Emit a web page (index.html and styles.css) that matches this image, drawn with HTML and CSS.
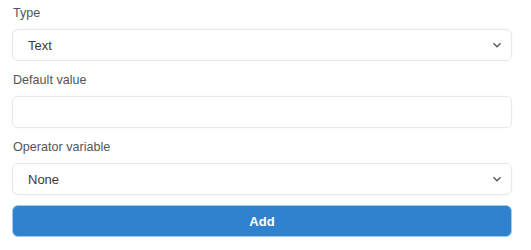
FILE: index.html
```html
<!DOCTYPE html>
<html>
<head>
<meta charset="utf-8">
<link rel="stylesheet" href="styles.css">
</head>
<body>
<form class="form">
  <div class="field">
    <label class="label">Type</label>
    <div class="select">
      <span class="value">Text</span>
      <svg class="chev" viewBox="0 0 24 24" width="16" height="16"><path d="M16.59 8.59L12 13.17 7.41 8.59 6 10l6 6 6-6z" fill="#555"/></svg>
    </div>
  </div>
  <div class="field">
    <label class="label">Default value</label>
    <div class="input"></div>
  </div>
  <div class="field">
    <label class="label">Operator variable</label>
    <div class="select">
      <span class="value">None</span>
      <svg class="chev" viewBox="0 0 24 24" width="16" height="16"><path d="M16.59 8.59L12 13.17 7.41 8.59 6 10l6 6 6-6z" fill="#555"/></svg>
    </div>
  </div>
  <button type="button" class="btn">Add</button>
</form>
</body>
</html>
```
FILE: styles.css
```css
html, body {
  margin: 0;
  padding: 0;
  background: #fff;
}
body {
  font-family: "Liberation Sans", Arial, sans-serif;
  color: #4a4a4a;
}
.form {
  width: 500px;
  padding: 4px 12px 0 12px;
  display: flex;
  flex-direction: column;
}
.field {
  display: flex;
  flex-direction: column;
  margin-bottom: 10px;
}
.label {
  font-size: 12.6px;
  line-height: 18px;
  margin-bottom: 7px;
  padding-left: 1px;
  color: #555;
}
.select, .input {
  box-sizing: border-box;
  height: 32px;
  border: 1px solid #e6e8eb;
  border-radius: 6px;
  box-shadow: 0 0 2px rgba(0,0,0,0.05);
  display: flex;
  align-items: center;
  justify-content: space-between;
  padding: 0 6px 0 15px;
}
.value {
  font-size: 13px;
  color: #3a3a3a;
}
.chev {
  display: block;
}
.btn {
  box-sizing: border-box;
  height: 32px;
  width: 100%;
  border: 1px solid #9fcdf2;
  border-radius: 6px;
  background: #3182ce;
  color: #fff;
  font-family: "Liberation Sans", Arial, sans-serif;
  font-weight: bold;
  font-size: 13px;
  padding: 0;
}
```
